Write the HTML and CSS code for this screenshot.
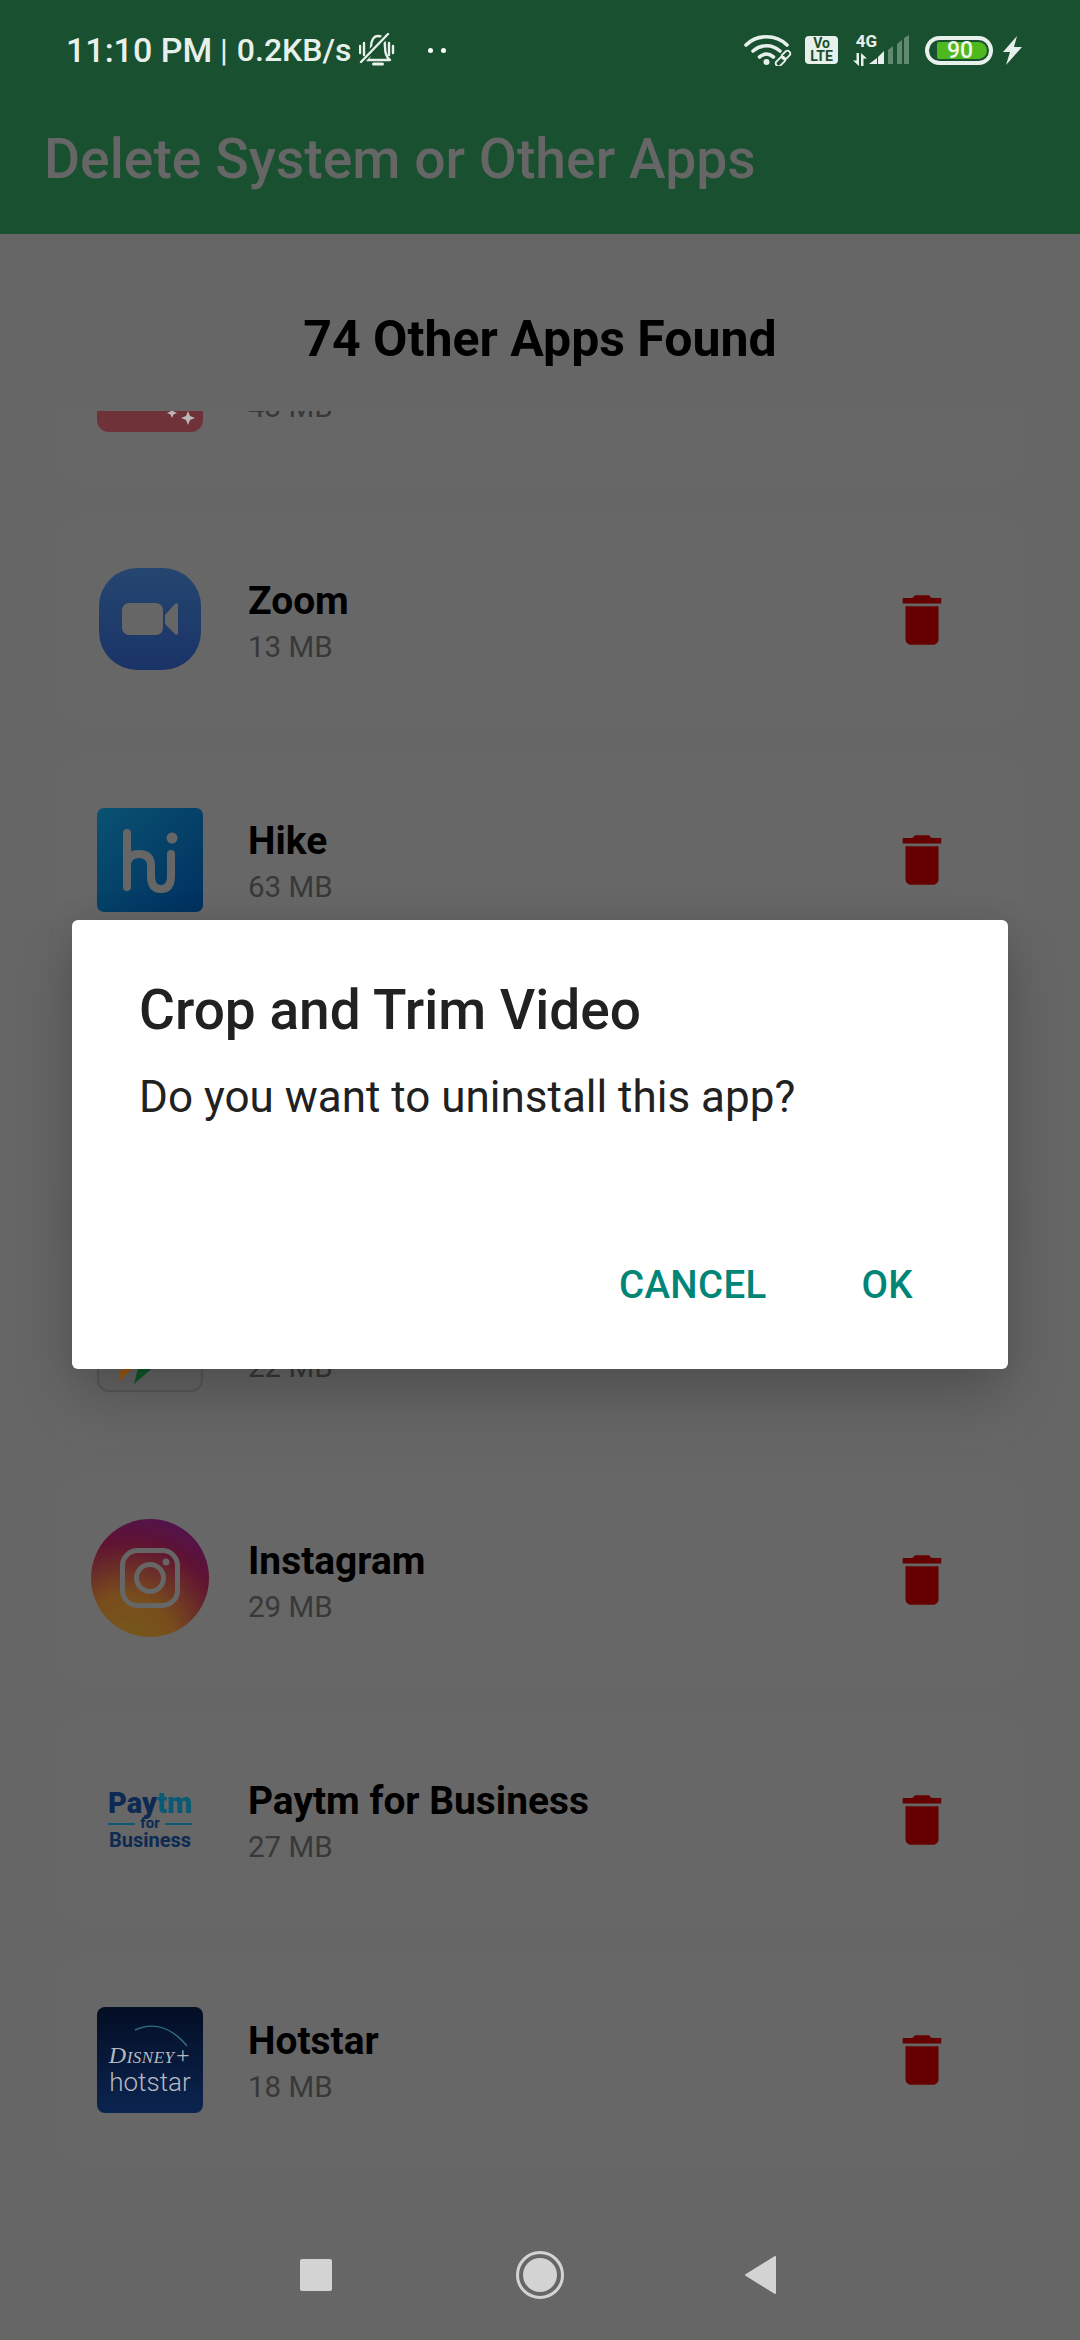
FILE: index.html
```html
<!DOCTYPE html>
<html lang="en">
<head>
<meta charset="utf-8">
<title>Delete System or Other Apps</title>
<link rel="stylesheet" href="styles.css">
</head>
<body>
<div class="page">
  <header class="appbar">
    <div class="status">
      <div class="status-left">
        <span class="clock">11:10 PM</span>
        <span class="sep">|</span>
        <span class="speed">0.2KB/s</span>
        <svg class="bell" viewBox="0 0 36 34" fill="none" stroke="#e8f0ec" stroke-width="2.4" stroke-linecap="round" stroke-linejoin="round">
          <path d="M8 27C11 24 12 20 12 14C12 7 15 3 19 3C24 3 26 7 26 14C26 20 27 24 31 27Z"/>
          <path d="M2 29 29 1" stroke="#19502f" stroke-width="6"/>
          <path d="M2 29 29 1"/>
          <path d="M14.500 31h9" stroke-width="3"/>
          <path d="M1 13v7M5 10v12M30 10v12M34 13v7"/>
        </svg>
        <span class="dots"><i></i><i></i></span>
      </div>
      <div class="status-right">
        <svg class="wifi" viewBox="0 0 48 32" fill="none" stroke="#e8f0ec" stroke-linecap="round">
          <path d="M2 11C13 0 32 0 43 11" stroke-width="3.6"/>
          <path d="M9 17c8-7 19-7 27 0" stroke-width="3.6"/>
          <path d="M15.500 23c5-4 9-4 14 0" stroke-width="3.6"/>
          <circle cx="22.500" cy="28" r="3" fill="#e8f0ec" stroke="none"/>
          <path d="M32 28l5-5a3 3 0 0 1 4 4l-5 5a3 3 0 0 1-4-4zM38 21l4-4a3 3 0 0 1 4 4l-4 4a3 3 0 0 1-4-4z" stroke-width="1.800"/>
        </svg>
        <span class="volte">Vo<br>LTE</span>
        <span class="net">
          <span class="net-label">4G</span>
          <svg class="net-arrows" viewBox="0 0 14 13" fill="#e8f0ec"><path d="M3.500 0H6V13L0 7.500H3.500ZM8 0 14 5.500H10.500V13H8Z"/></svg>
        </span>
        <svg class="bars" viewBox="0 0 41 30">
          <path d="M0 29 8 23V29Z" fill="#e8f0ec"/>
          <path d="M9 22 15 16V29H9Z" fill="#e8f0ec"/>
          <path d="M19 15 24 11V29H19Z" fill="#e8f0ec" opacity=".35"/>
          <path d="M28 9 33 5V29H28Z" fill="#e8f0ec" opacity=".35"/>
          <path d="M35 3 40 0V29H35Z" fill="#e8f0ec" opacity=".35"/>
        </svg>
        <span class="battery"><span class="battery-fill">90</span></span>
        <svg class="bolt" viewBox="0 0 19 29" fill="#e8f0ec"><path d="M14 0 0 16h7L3 29 19 11h-8z"/></svg>
      </div>
    </div>
    <h1 class="app-title">Delete System or Other Apps</h1>
  </header>

  <h2 class="found">74 Other Apps Found</h2>

  <main class="list">
    <div class="list-inner">
      <article class="card">
        <div class="icon-slot">
          <svg class="icon" viewBox="0 0 106 104">
            <path d="M0 0H106V92a12 12 0 0 1-12 12H12A12 12 0 0 1 0 92Z" fill="#6f3238"/>
            <path d="M75 80l1.500 3.500 3.500 1.500-3.500 1.500L75 90l-1.500-3.500L70 85l3.500-1.500zM91 83l2 5 5 2-5 2-2 5-2-5-5-2 5-2z" fill="#bdb8b8"/>
          </svg>
        </div>
        <div class="meta"><div class="name">&nbsp;</div><div class="size">43 MB</div></div>
        <svg class="trash" viewBox="0 0 24 24"><path d="M6 19c0 1.100.9 2 2 2h8c1.100 0 2-.9 2-2V7H6v12zM19 4h-3.500l-1-1h-5l-1 1H5v2h14V4z"/></svg>
      </article>

      <article class="card">
        <div class="icon-slot">
          <svg class="icon" viewBox="0 0 106 104">
            <defs><linearGradient id="zg" x1="0" y1="0" x2="0" y2="1"><stop offset="0" stop-color="#254670"/><stop offset="1" stop-color="#1a3368"/></linearGradient></defs>
            <rect x="2" y="0" width="102" height="102" rx="38" fill="url(#zg)"/>
            <rect x="25" y="35" width="41" height="32" rx="7" fill="#666"/>
            <path d="M68 47 78 36c1-1 3-1 3 1v28c0 2-2 2-3 1L68 56Z" fill="#666"/>
          </svg>
        </div>
        <div class="meta"><div class="name">Zoom</div><div class="size">13 MB</div></div>
        <svg class="trash" viewBox="0 0 24 24"><path d="M6 19c0 1.100.9 2 2 2h8c1.100 0 2-.9 2-2V7H6v12zM19 4h-3.500l-1-1h-5l-1 1H5v2h14V4z"/></svg>
      </article>

      <article class="card">
        <div class="icon-slot">
          <svg class="icon" viewBox="0 0 106 104">
            <defs><linearGradient id="hg" x1="0" y1="0" x2="1" y2="1"><stop offset="0" stop-color="#0a5272"/><stop offset="1" stop-color="#003060"/></linearGradient></defs>
            <rect width="106" height="104" rx="7" fill="url(#hg)"/>
            <path d="M30 25V79M30 58Q30 46 42 46Q54 46 54 58V68Q54 81 64 81Q74 81 74 68V46" fill="none" stroke="#666" stroke-width="8" stroke-linecap="round"/>
            <circle cx="75" cy="30" r="5.500" fill="#666"/>
          </svg>
        </div>
        <div class="meta"><div class="name">Hike</div><div class="size">63 MB</div></div>
        <svg class="trash" viewBox="0 0 24 24"><path d="M6 19c0 1.100.9 2 2 2h8c1.100 0 2-.9 2-2V7H6v12zM19 4h-3.500l-1-1h-5l-1 1H5v2h14V4z"/></svg>
      </article>

      <article class="card">
        <div class="icon-slot"></div>
        <div class="meta"><div class="name">&nbsp;</div><div class="size">&nbsp;</div></div>
      </article>

      <article class="card">
        <div class="icon-slot">
          <svg class="icon" viewBox="0 0 106 104">
            <rect x="1" y="1" width="104" height="102" rx="11" fill="#666" stroke="#595959" stroke-width="2"/>
            <path d="M25 76H40L21 94Z" fill="#a15a12"/>
            <path d="M42 76H60L37 96Z" fill="#0d5a2b"/>
          </svg>
        </div>
        <div class="meta"><div class="name">&nbsp;</div><div class="size">22 MB</div></div>
      </article>

      <article class="card">
        <div class="icon-slot">
          <div class="insta">
            <svg class="insta-glyph" viewBox="0 0 60 60" fill="none" stroke="#666" stroke-width="5">
              <rect x="2.500" y="2.500" width="55" height="55" rx="15"/>
              <circle cx="30" cy="30" r="13.500"/>
              <circle cx="46" cy="14" r="3.500" fill="#666" stroke="none"/>
            </svg>
          </div>
        </div>
        <div class="meta"><div class="name">Instagram</div><div class="size">29 MB</div></div>
        <svg class="trash" viewBox="0 0 24 24"><path d="M6 19c0 1.100.9 2 2 2h8c1.100 0 2-.9 2-2V7H6v12zM19 4h-3.500l-1-1h-5l-1 1H5v2h14V4z"/></svg>
      </article>

      <article class="card">
        <div class="icon-slot">
          <div class="paytm">
            <div class="paytm-word">Pay<span class="paytm-tm">tm</span></div>
            <div class="paytm-for"><i></i><span>for</span><i></i></div>
            <div class="paytm-biz">Business</div>
          </div>
        </div>
        <div class="meta"><div class="name">Paytm for Business</div><div class="size">27 MB</div></div>
        <svg class="trash" viewBox="0 0 24 24"><path d="M6 19c0 1.100.9 2 2 2h8c1.100 0 2-.9 2-2V7H6v12zM19 4h-3.500l-1-1h-5l-1 1H5v2h14V4z"/></svg>
      </article>

      <article class="card">
        <div class="icon-slot">
          <div class="hotstar">
            <svg class="hotstar-arc" viewBox="0 0 106 40" fill="none"><path d="M38 15C58 6 76 14 90 31" stroke="#2f6f86" stroke-width="1.500"/></svg>
            <div class="hotstar-disney">Disney+</div>
            <div class="hotstar-name">hotstar</div>
          </div>
        </div>
        <div class="meta"><div class="name">Hotstar</div><div class="size">18 MB</div></div>
        <svg class="trash" viewBox="0 0 24 24"><path d="M6 19c0 1.100.9 2 2 2h8c1.100 0 2-.9 2-2V7H6v12zM19 4h-3.500l-1-1h-5l-1 1H5v2h14V4z"/></svg>
      </article>
    </div>
  </main>

  <nav class="navbar">
    <span class="nav-square"></span>
    <span class="nav-home"><span class="nav-home-dot"></span></span>
    <svg class="nav-back" viewBox="0 0 32 38"><path d="M1 19 30 1V37Z" fill="#d3d3d3" stroke="#d3d3d3" stroke-width="2" stroke-linejoin="round"/></svg>
  </nav>

  <div class="dialog">
    <div class="dialog-title">Crop and Trim Video</div>
    <div class="dialog-body">Do you want to uninstall this app?</div>
    <div class="dialog-actions">
      <span class="dialog-btn">CANCEL</span>
      <span class="dialog-btn">OK</span>
    </div>
  </div>
</div>
</body>
</html>
```

FILE: styles.css
```css
* { box-sizing: border-box; }
html, body { margin: 0; padding: 0; }
body { width: 1080px; height: 2340px; overflow: hidden; background: #666; font-family: Roboto, "Liberation Sans", sans-serif; }
.page { position: relative; width: 1080px; height: 2340px; display: flex; flex-direction: column; background: #666; }

.appbar { height: 234px; flex: none; background: #19502f; display: flex; flex-direction: column; }
.status { height: 100px; padding: 0 58px 0 66px; display: flex; align-items: center; justify-content: space-between; }
.status-left { display: flex; align-items: center; color: #e8f0ec; font-weight: 500; font-size: 34px; }
.clock { width: 147px; white-space: nowrap; }
.sep { margin: 0 9px 0 7px; font-weight: 400; font-size: 32px; }
.speed { font-size: 32px; white-space: nowrap; }
.bell { width: 36px; height: 34px; margin-left: 8px; }
.dots { display: flex; gap: 8px; margin-left: 33px; }
.dots i { width: 5px; height: 5px; border-radius: 50%; background: #fff; }
.status-right { display: flex; align-items: center; height: 30px; }
.wifi { width: 48px; height: 32px; }
.volte { width: 33px; height: 28px; margin-left: 13px; border-radius: 4px; background: #e8f0ec; color: #19502f; font-size: 14px; line-height: 13px; font-weight: 700; text-align: center; padding-top: 1px; }
.net { width: 16px; margin-left: 14px; display: flex; flex-direction: column; align-items: center; gap: 6px; }
.net-label { font-size: 17px; line-height: 12px; font-weight: 700; color: #e8f0ec; margin-left: 13px; white-space: nowrap; }
.net-arrows { width: 14px; height: 13px; }
.bars { width: 41px; height: 30px; margin-left: 1px; }
.battery { width: 68px; height: 29px; margin-left: 15px; border: 4px solid #e8f0ec; border-radius: 15px; padding: 2px 2px 2px 8px; display: flex; }
.battery-fill { flex: 1; background: #4fb81f; border-radius: 2px 9px 9px 2px; color: #f2f6ef; font-size: 23px; line-height: 17px; font-weight: 500; padding-left: 10px; }
.bolt { width: 19px; height: 29px; margin-left: 10px; }
.app-title { margin: 0; padding: 28px 0 0 44px; font-size: 55.300px; line-height: 64px; font-weight: 500; color: #666; white-space: nowrap; }

.found { margin: 0; flex: none; height: 177px; padding-top: 73px; text-align: center; font-size: 50px; line-height: 64px; font-weight: 700; color: #000; }

.list { flex: 1; overflow: hidden; min-height: 0; }
.list-inner { margin-top: -136px; padding: 0 52px 0 53px; display: flex; flex-direction: column; gap: 30px; }
.card { height: 210px; flex: none; border-radius: 30px; background: #676767; display: flex; align-items: center; padding: 0 73px 0 44px; }
.icon-slot { width: 106px; height: 104px; flex: none; display: flex; align-items: center; justify-content: center; }
.icon { width: 106px; height: 104px; display: block; }
.meta { flex: 1; margin-left: 45px; padding-top: 7px; }
.name { font-size: 38.900px; line-height: 46px; font-weight: 700; color: #000; }
.size { font-size: 29.500px; line-height: 46px; color: #383838; }
.trash { width: 66px; height: 66px; fill: #660000; flex: none; }

.insta { width: 118px; height: 118px; flex: none; margin-bottom: 4px; border-radius: 50%; background: radial-gradient(circle at 30% 105%, #75591a 0, #784d1c 32%, #5f1233 68%, #48155f 100%); display: flex; align-items: center; justify-content: center; }
.insta-glyph { width: 60px; height: 60px; }

.paytm { width: 84px; display: flex; flex-direction: column; align-items: center; color: #0c2a52; }
.paytm-word { font-size: 29px; line-height: 27px; font-weight: 900; white-space: nowrap; }
.paytm-tm { color: #0b5a75; }
.paytm-for { width: 100%; display: flex; align-items: center; gap: 5px; font-size: 15px; line-height: 13px; font-weight: 700; }
.paytm-for i { flex: 1; height: 2px; background: #0b5a75; }
.paytm-biz { font-size: 20px; line-height: 20px; font-weight: 700; white-space: nowrap; }

.hotstar { position: relative; width: 106px; height: 106px; border-radius: 8px; background: linear-gradient(#040e24, #0b2450); color: #b5b8bf; text-align: center; display: flex; flex-direction: column; justify-content: flex-end; padding-bottom: 16px; }
.hotstar-arc { position: absolute; left: 0; top: 8px; width: 106px; height: 40px; }
.hotstar-disney { font-family: "Liberation Serif", serif; font-style: italic; font-variant: small-caps; font-size: 24px; line-height: 24px; letter-spacing: .5px; }
.hotstar-name { font-size: 26px; line-height: 30px; font-weight: 300; }

.navbar { height: 130px; flex: none; position: relative; }
.nav-square { position: absolute; left: 300px; top: 49px; width: 32px; height: 32px; border-radius: 2px; background: #d3d3d3; }
.nav-home { position: absolute; left: 516px; top: 41px; width: 48px; height: 48px; border-radius: 50%; border: 3px solid #d3d3d3; display: flex; align-items: center; justify-content: center; }
.nav-home-dot { width: 34px; height: 34px; border-radius: 50%; background: #d3d3d3; }
.nav-back { position: absolute; left: 745px; top: 46px; width: 32px; height: 38px; }

.dialog { position: absolute; left: 72px; top: 920px; width: 936px; height: 449px; border-radius: 6px; background: #fff; box-shadow: 0 30px 60px rgba(0,0,0,.2), 0 0 30px rgba(0,0,0,.08); padding: 54px 95px 0 67px; display: flex; flex-direction: column; }
.dialog-title { font-size: 55px; line-height: 72px; font-weight: 500; color: #212121; }
.dialog-body { margin-top: 21px; font-size: 44px; line-height: 60px; color: #212121; }
.dialog-actions { margin-top: auto; margin-bottom: 56px; display: flex; justify-content: flex-end; gap: 95px; }
.dialog-btn { font-size: 38.500px; line-height: 56px; font-weight: 500; letter-spacing: .3px; color: #008577; }
```
